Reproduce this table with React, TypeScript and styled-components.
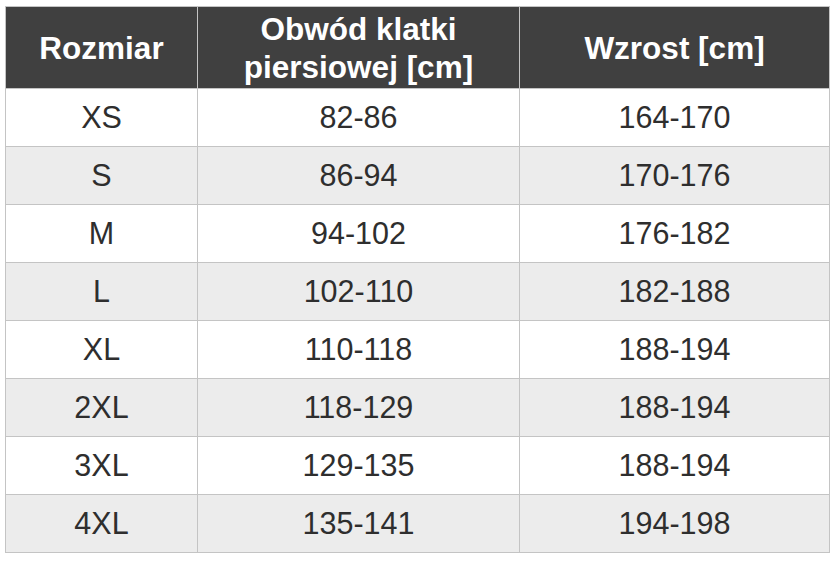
import React from "react";
import styled, { createGlobalStyle } from "styled-components";

const GlobalStyle = createGlobalStyle`
  html, body {
    margin: 0;
    padding: 0;
    background: #ffffff;
  }
  body {
    font-family: "Liberation Sans", Arial, sans-serif;
  }
`;

const Page = styled.div`
  padding: 6px 0 0 5px;
  width: 837px;
  height: 562px;
  box-sizing: border-box;
`;

const Table = styled.div`
  display: grid;
  grid-template-columns: 192px 322px 310px;
  grid-template-rows: 82px repeat(8, 58px);
  width: max-content;
  border-top: 1px solid #c4c4c4;
  border-left: 1px solid #c4c4c4;
`;

const Cell = styled.div<{ $alt?: boolean }>`
  box-sizing: border-box;
  border-right: 1px solid #c4c4c4;
  border-bottom: 1px solid #c4c4c4;
  background: ${(p) => (p.$alt ? "#ececec" : "#ffffff")};
  color: #2e2e2e;
  font-size: 30.5px;
  display: flex;
  align-items: center;
  justify-content: center;
  text-align: center;
`;

const HeadCell = styled.div`
  box-sizing: border-box;
  border-right: 1px solid #c4c4c4;
  border-bottom: 1px solid #c4c4c4;
  background: #404040;
  color: #ffffff;
  font-weight: bold;
  font-size: 31.5px;
  line-height: 38px;
  display: flex;
  align-items: center;
  justify-content: center;
  text-align: center;
`;

const rows: [string, string, string][] = [
  ["XS", "82-86", "164-170"],
  ["S", "86-94", "170-176"],
  ["M", "94-102", "176-182"],
  ["L", "102-110", "182-188"],
  ["XL", "110-118", "188-194"],
  ["2XL", "118-129", "188-194"],
  ["3XL", "129-135", "188-194"],
  ["4XL", "135-141", "194-198"],
];

export default function App() {
  return (
    <>
      <GlobalStyle />
      <Page>
        <Table>
          <HeadCell>Rozmiar</HeadCell>
          <HeadCell>
            Obwód klatki
            <br />
            piersiowej [cm]
          </HeadCell>
          <HeadCell>Wzrost [cm]</HeadCell>
          {rows.map((r, i) =>
            r.map((v, j) => (
              <Cell key={`${i}-${j}`} $alt={i % 2 === 1}>
                {v}
              </Cell>
            ))
          )}
        </Table>
      </Page>
    </>
  );
}
